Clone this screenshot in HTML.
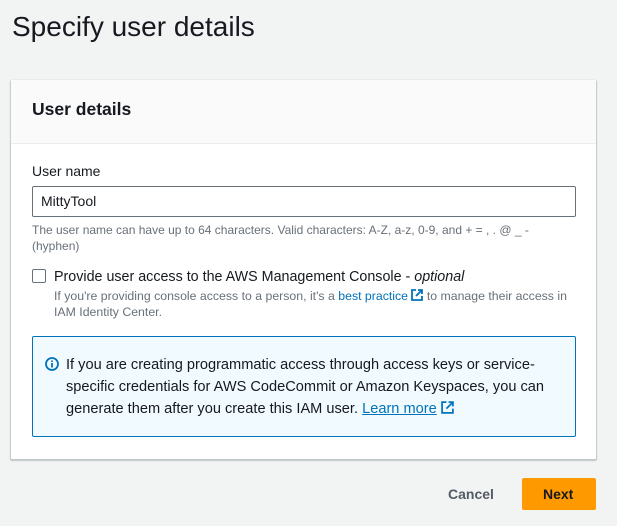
<!DOCTYPE html>
<html><head><style>
body{margin:0;width:617px;height:526px;background:#f2f3f3;font-family:"Liberation Sans",sans-serif;color:#16191f;position:relative;overflow:hidden}
.a{position:absolute;white-space:nowrap}
.card{position:absolute;left:11px;top:80px;width:585px;height:379px;background:#fff;box-shadow:0 1px 1px 1px rgba(0,28,36,.2);border-radius:1px}
.hdr{position:absolute;left:0;top:0;width:585px;height:63px;background:#fafafa;border-bottom:1px solid #eaeded}
.link{color:#0073bb}
</style></head><body>
<div class="a" style="left:12px;top:11px;font-size:28px">Specify user details</div>
<div class="card">
 <div class="hdr"></div>
 <div class="a" style="left:21px;top:19px;font-size:17.5px;font-weight:bold">User details</div>
 <div class="a" style="left:21px;top:83px;font-size:14px">User name</div>
 <div class="a" style="left:21px;top:106px;width:542px;height:29px;border:1px solid #687078;border-radius:2px"></div>
 <div class="a" style="left:30px;top:113px;font-size:14px">MittyTool</div>
 <div class="a" style="left:21px;top:142px;font-size:12px;color:#687078;line-height:16px">The user name can have up to 64 characters. Valid characters: A-Z, a-z, 0-9, and + = , . @ _ -<br>(hyphen)</div>
 <div class="a" style="left:21px;top:189px;width:12px;height:12px;border:1px solid #687078;border-radius:2px"></div>
 <div class="a" style="left:43px;top:189px;font-size:14.3px">Provide user access to the AWS Management Console - <i>optional</i></div>
 <div class="a" style="left:43px;top:208px;font-size:12.3px;color:#687078;line-height:16px">If you're providing console access to a person, it's a <span class="link">best practice</span> <svg width="12" height="12" viewBox="0 0 12 12" style="vertical-align:-1px"><path d="M5 1H1v10h10V7M7 1h4v4M11 1L5 7" fill="none" stroke="#0073bb" stroke-width="1.8"/></svg> to manage their access in<br>IAM Identity Center.</div>
 <div class="a" style="left:21px;top:256px;width:542px;height:99px;background:#f1faff;border:1px solid #0073bb;border-radius:2px"></div>
 <svg class="a" style="left:34px;top:277px" width="14" height="14" viewBox="0 0 14 14"><circle cx="7" cy="7" r="6" fill="none" stroke="#0073bb" stroke-width="1.8"/><path d="M7 6v4.5M7 3.5v1.5" stroke="#0073bb" stroke-width="1.8"/></svg>
 <div class="a" style="left:55px;top:274px;font-size:14.6px;line-height:22px">If you are creating programmatic access through access keys or service-<br>specific credentials for AWS CodeCommit or Amazon Keyspaces, you can<br>generate them after you create this IAM user. <span class="link" style="text-decoration:underline">Learn more</span> <svg width="13" height="13" viewBox="0 0 12 12" style="vertical-align:-1px"><path d="M5 1H1v10h10V7M7 1h4v4M11 1L5 7" fill="none" stroke="#0073bb" stroke-width="1.6"/></svg></div>
</div>
<div class="a" style="left:448px;top:486px;font-size:14px;font-weight:bold;color:#545b64">Cancel</div>
<div class="a" style="left:522px;top:478px;width:74px;height:32px;background:#ff9900;border-radius:2px"></div>
<div class="a" style="left:543px;top:486px;font-size:14px;font-weight:bold">Next</div>
</body></html>
